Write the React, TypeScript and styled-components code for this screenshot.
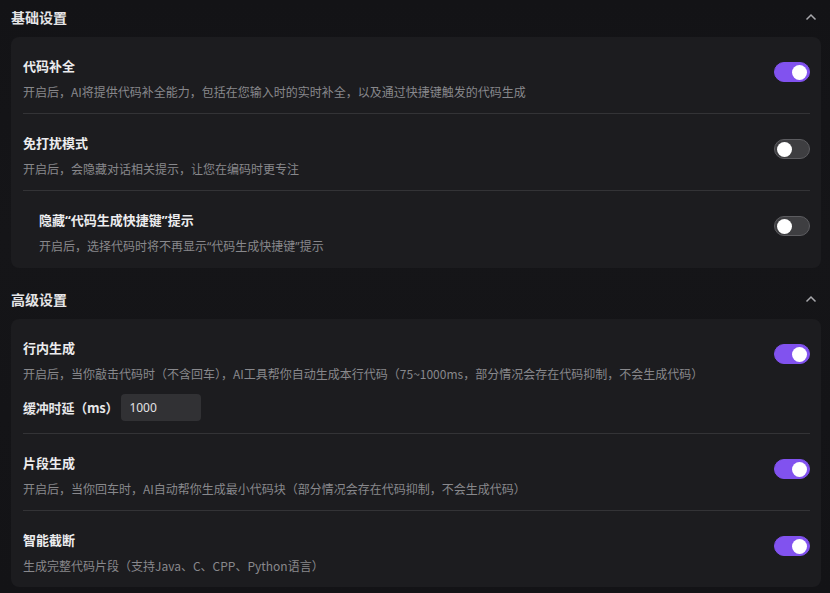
import { useState } from "react";
import styled, { createGlobalStyle } from "styled-components";

const GlobalStyle = createGlobalStyle`
  html, body {
    margin: 0;
    padding: 0;
    background: #141417;
  }
  body {
    font-family: "Noto Sans CJK SC", "Noto Sans", "Liberation Sans", sans-serif;
    color: #e6e6e6;
  }
  * {
    box-sizing: border-box;
  }
`;

const Page = styled.div`
  width: 830px;
  min-height: 593px;
  padding: 0 9px 0 11px;
  background: linear-gradient(180deg, #131316 0%, #151518 40%, #131316 100%);
  display: flex;
  flex-direction: column;
  gap: 14px;
`;

const Section = styled.section`
  display: flex;
  flex-direction: column;
`;

const SectionHeader = styled.div`
  height: 34px;
  margin-bottom: 3px;
  display: flex;
  align-items: center;
  justify-content: space-between;
  padding-right: 2px;
`;

const SectionTitle = styled.h2`
  margin: 0;
  font-size: 14px;
  font-weight: 700;
  color: #e4e4e6;
  line-height: 20px;
`;

const Chevron = styled.button`
  width: 16px;
  height: 16px;
  padding: 0;
  border: none;
  background: none;
  color: #a8a8ac;
  display: flex;
  align-items: center;
  justify-content: center;
  cursor: pointer;
`;

const Card = styled.div`
  background: #1c1c1f;
  border-radius: 8px;
  padding: 0 11px 0 12px;
`;

const Row = styled.div<{ $indent?: boolean }>`
  display: grid;
  grid-template-columns: 1fr auto;
  column-gap: 16px;
  padding: 19px 0 11px ${({ $indent }) => ($indent ? "16px" : "0")};
  border-bottom: 1px solid #333336;

  &:last-child {
    border-bottom: none;
  }
`;

const Texts = styled.div`
  display: flex;
  flex-direction: column;
  gap: 6px;
  min-width: 0;
`;

const ItemTitle = styled.div`
  font-size: 13px;
  font-weight: 700;
  line-height: 20px;
  color: #ececee;
`;

const ItemDesc = styled.div`
  font-size: 12px;
  line-height: 20px;
  color: #88888c;
  white-space: nowrap;
`;

// curly quotes set in a proportional latin face so they stay narrow
const Quote = styled.span`
  font-family: "Noto Sans", "Liberation Sans", sans-serif;
`;

const Track = styled.button<{ $on: boolean }>`
  margin-top: 6px;
  width: 36px;
  height: 20px;
  border-radius: 10px;
  border: 1px solid ${({ $on }) => ($on ? "#8152ef" : "#5c5c60")};
  background: ${({ $on }) => ($on ? "#8152ef" : "#3e3e41")};
  display: flex;
  align-items: center;
  justify-content: ${({ $on }) => ($on ? "flex-end" : "flex-start")};
  padding: 0 2px;
  cursor: pointer;
`;

const Knob = styled.span`
  width: 15px;
  height: 15px;
  border-radius: 50%;
  background: #ffffff;
`;

const Field = styled.div`
  display: flex;
  align-items: center;
  gap: 3px;
  margin-top: 4px;
  margin-bottom: 1px;
`;

const FieldLabel = styled.label`
  font-size: 13px;
  font-weight: 700;
  color: #e6e6e8;
  letter-spacing: -0.2px;
`;

const NumberInput = styled.input`
  width: 80px;
  height: 27px;
  border: none;
  border-radius: 4px;
  background: #313134;
  color: #e2e2e4;
  font-family: "Noto Sans", "Liberation Sans", sans-serif;
  font-size: 12px;
  padding: 0 8px;
  outline: none;
`;

const ChevronUp = () => (
  <svg width="12" height="8" viewBox="0 0 12 8" fill="none">
    <path d="M1.5 6.5 6 2l4.5 4.5" stroke="currentColor" strokeWidth="1.5" />
  </svg>
);

const Toggle = ({ initial }: { initial: boolean }) => {
  const [on, setOn] = useState(initial);
  return (
    <Track $on={on} onClick={() => setOn(!on)}>
      <Knob />
    </Track>
  );
};

const withQuotes = (text: string) =>
  text.split(/([“”])/).map((part, i) =>
    part === "“" || part === "”" ? <Quote key={i}>{part}</Quote> : part
  );

type Item = {
  title: string;
  desc: string;
  on: boolean;
  indent?: boolean;
  delay?: boolean;
};

const basic: Item[] = [
  {
    title: "代码补全",
    desc: "开启后，AI将提供代码补全能力，包括在您输入时的实时补全，以及通过快捷键触发的代码生成",
    on: true,
  },
  {
    title: "免打扰模式",
    desc: "开启后，会隐藏对话相关提示，让您在编码时更专注",
    on: false,
  },
  {
    title: "隐藏“代码生成快捷键”提示",
    desc: "开启后，选择代码时将不再显示“代码生成快捷键”提示",
    on: false,
    indent: true,
  },
];

const advanced: Item[] = [
  {
    title: "行内生成",
    desc: "开启后，当你敲击代码时（不含回车），AI工具帮你自动生成本行代码（75~1000ms，部分情况会存在代码抑制，不会生成代码）",
    on: true,
    delay: true,
  },
  {
    title: "片段生成",
    desc: "开启后，当你回车时，AI自动帮你生成最小代码块（部分情况会存在代码抑制，不会生成代码）",
    on: true,
  },
  {
    title: "智能截断",
    desc: "生成完整代码片段（支持Java、C、CPP、Python语言）",
    on: true,
  },
];

const SettingsGroup = ({ title, items }: { title: string; items: Item[] }) => (
  <Section>
    <SectionHeader>
      <SectionTitle>{title}</SectionTitle>
      <Chevron>
        <ChevronUp />
      </Chevron>
    </SectionHeader>
    <Card>
      {items.map((item) => (
        <Row key={item.title} $indent={item.indent}>
          <Texts>
            <ItemTitle>{withQuotes(item.title)}</ItemTitle>
            <ItemDesc>{withQuotes(item.desc)}</ItemDesc>
            {item.delay && (
              <Field>
                <FieldLabel>缓冲时延（ms）</FieldLabel>
                <NumberInput defaultValue="1000" />
              </Field>
            )}
          </Texts>
          <Toggle initial={item.on} />
        </Row>
      ))}
    </Card>
  </Section>
);

export default function App() {
  return (
    <>
      <GlobalStyle />
      <Page>
        <SettingsGroup title="基础设置" items={basic} />
        <SettingsGroup title="高级设置" items={advanced} />
      </Page>
    </>
  );
}
